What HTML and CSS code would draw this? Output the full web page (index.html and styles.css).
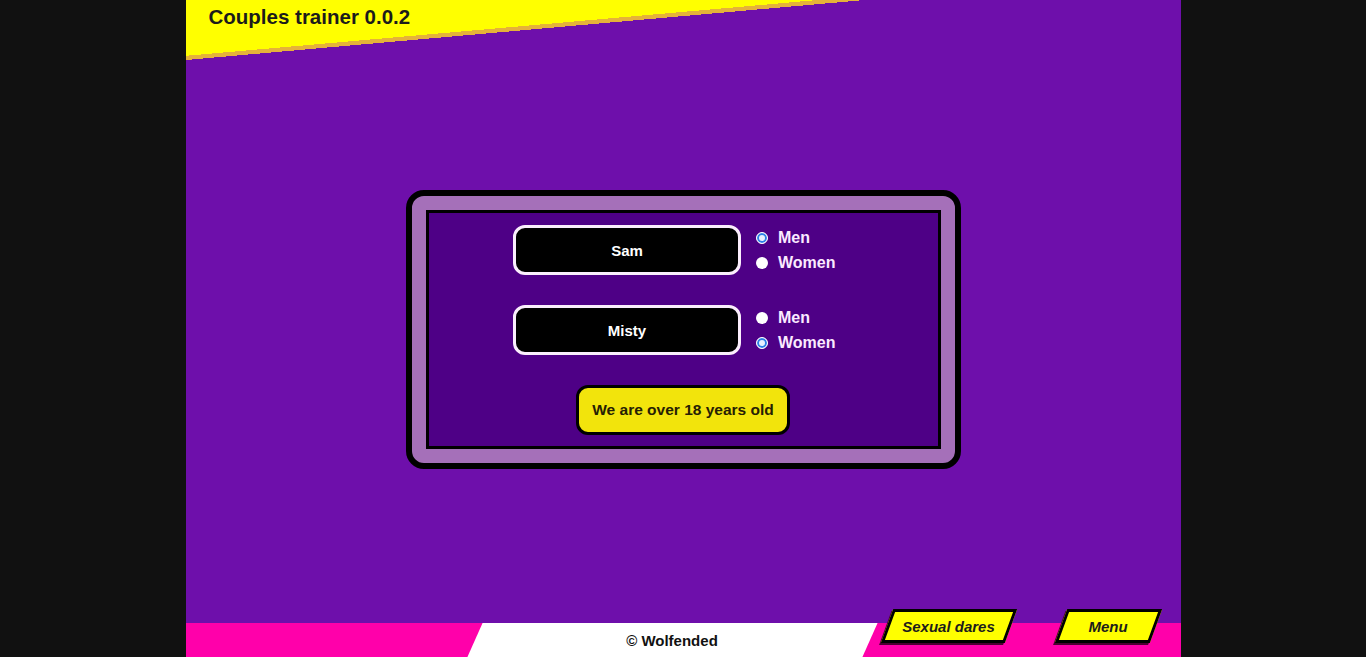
FILE: index.html
```html
<!DOCTYPE html>
<html lang="en">
<head>
    <meta charset="UTF-8">
    <meta name="viewport" content="width=device-width, initial-scale=1.0">
    <title>Couples trainer</title>
    <link rel="stylesheet" href="styles.css">
</head>
<body>

    <div class="app">
        <!-- Title banner -->
        <div class="banner">
            <h1>Couples trainer 0.0.2</h1>
        </div>

        <div class="main">
            <div class="card">
                <div class="card-inner">
                    <div class="player">
                        <input class="name" type="text" value="Sam" readonly>
                        <div class="gender">
                            <label class="option"><span class="radio checked"></span>Men</label>
                            <label class="option"><span class="radio"></span>Women</label>
                        </div>
                    </div>
                    <div class="player">
                        <input class="name" type="text" value="Misty" readonly>
                        <div class="gender">
                            <label class="option"><span class="radio"></span>Men</label>
                            <label class="option"><span class="radio checked"></span>Women</label>
                        </div>
                    </div>
                    <button class="age-button">We are over 18 years old</button>
                </div>
            </div>
        </div>

        <div class="footer">
            <div class="credit">© Wolfended</div>
            <a class="tab tab-dares" href="#">Sexual dares</a>
            <a class="tab tab-menu" href="#">Menu</a>
        </div>
    </div>

</body>
</html>
```

FILE: styles.css
```css
body {
    margin: 0;
    padding: 0;
    background-color: #111111;
    font-family: "Liberation Sans", Arial, sans-serif;
    height: 100vh;
    display: flex;
    justify-content: center;
}

.app {
    width: 995px;
    height: 100vh;
    background-color: #6e0fab;
    display: flex;
    flex-direction: column;
}

/* slanted yellow strip across the top */
.banner {
    width: 679px;
    height: 60px;
    flex-shrink: 0;
    background: linear-gradient(to bottom right, #ffff00 0 46.5%, #e5b23a 46.5% 50%, transparent 50%);
}

.banner h1 {
    margin: 0;
    padding: 5px 0 0 23px;
    font-size: 20.5px;
    line-height: 23px;
    font-weight: bold;
    color: #1b1b1b;
}

.main {
    flex: 1;
    display: flex;
    align-items: center;
    justify-content: center;
    padding-bottom: 24px;
}

.card {
    width: 555px;
    box-sizing: border-box;
    border: 6px solid #000000;
    border-radius: 18px;
    background: #a570b9;
    padding: 14px;
}

.card-inner {
    border: 3px solid #000000;
    background: #4e0086;
    padding: 12px 0 11px;
    display: flex;
    flex-direction: column;
    align-items: center;
    gap: 30px;
}

.player {
    display: flex;
    align-items: center;
    gap: 15px;
}

.name {
    width: 228px;
    height: 50px;
    box-sizing: border-box;
    background: #000000;
    border: 3px solid #fbeefd;
    border-radius: 12px;
    color: #ffffff;
    font-family: inherit;
    font-size: 15px;
    font-weight: bold;
    text-align: center;
    outline: none;
}

.gender {
    width: 97px;
    display: flex;
    flex-direction: column;
}

.option {
    height: 25px;
    display: flex;
    align-items: center;
    gap: 10px;
    color: #fbeaff;
    font-size: 16px;
    font-weight: bold;
}

.radio {
    width: 12px;
    height: 12px;
    border-radius: 50%;
    background: #ffffff;
}

.radio.checked {
    box-sizing: border-box;
    border: 1px solid #ffffff;
    box-shadow: inset 0 0 0 2px #2c7fe6;
    background: #e8f0ff;
}

.age-button {
    width: 214px;
    height: 50px;
    background: #f2e40c;
    border: 3px solid #000000;
    border-radius: 12px;
    color: #262004;
    font-family: inherit;
    font-size: 15.5px;
    font-weight: bold;
    cursor: pointer;
}

.footer {
    height: 34px;
    flex-shrink: 0;
    background: #ff00aa;
    display: flex;
    align-items: flex-start;
}

.credit {
    position: relative;
    z-index: 0;
    margin-left: 289px;
    width: 395px;
    height: 34px;
    display: flex;
    align-items: center;
    justify-content: center;
    font-size: 15px;
    font-weight: bold;
    color: #111111;
}

.credit::before {
    content: '';
    position: absolute;
    inset: 0;
    background: #ffffff;
    transform: skewX(-24deg);
    z-index: -1;
}

/* slanted yellow tabs poking above the footer */
.tab {
    position: relative;
    z-index: 0;
    margin-top: -14px;
    height: 34px;
    display: flex;
    align-items: center;
    justify-content: center;
    color: #1c1c1c;
    text-decoration: none;
    font-size: 15px;
    font-weight: bold;
    font-style: italic;
}

.tab::before {
    content: '';
    position: absolute;
    inset: 0;
    background: #ffff00;
    border: 3px solid #000000;
    box-shadow: -1px 2px 0 #4a0030;
    transform: skewX(-20deg);
    z-index: -1;
}

.tab-dares {
    margin-left: 17px;
    width: 124px;
}

.tab-menu {
    margin-left: 50px;
    width: 95px;
}
```
